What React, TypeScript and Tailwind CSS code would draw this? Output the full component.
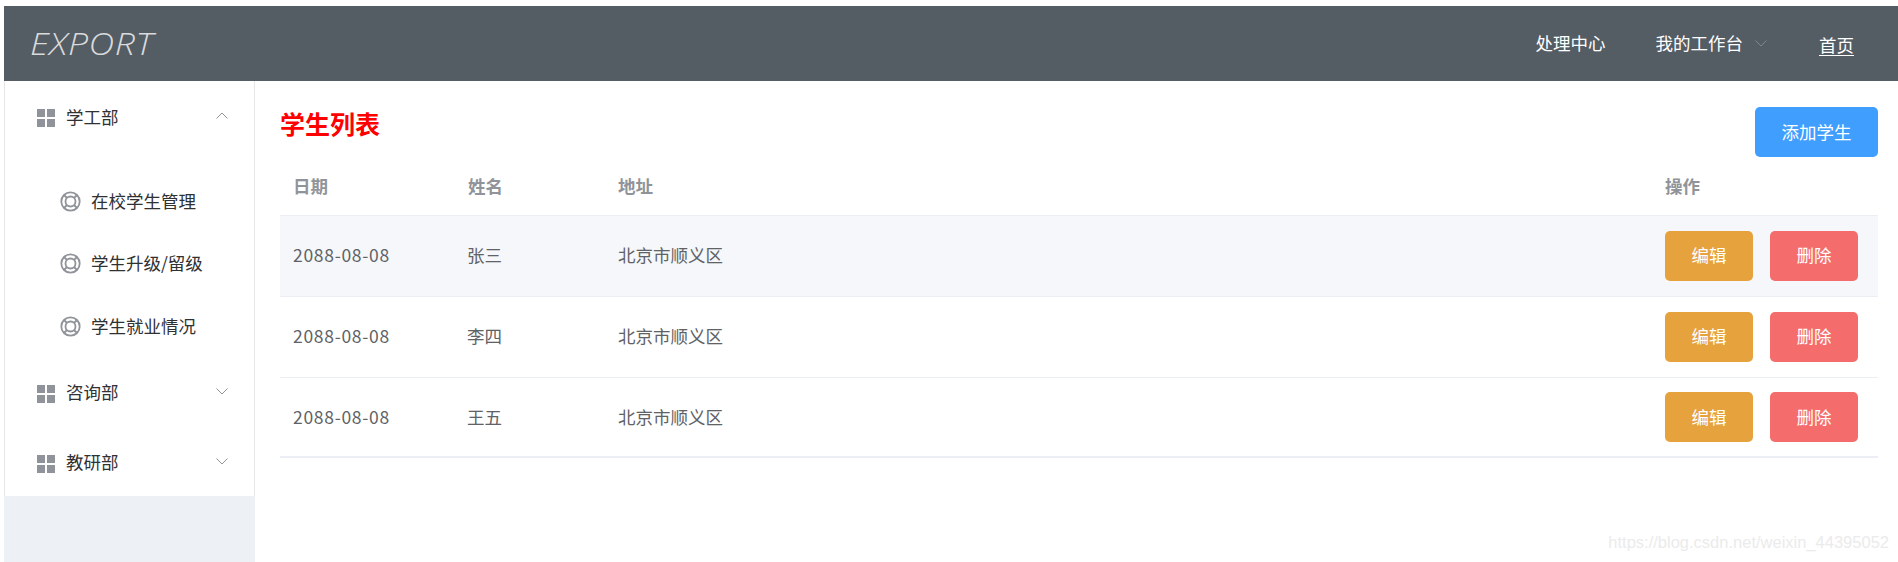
import React from "react";

const CJK = "font-['Noto_Sans_CJK_SC','Liberation_Sans',sans-serif]";

function GridIcon() {
  return (
    <svg width="18" height="18" viewBox="0 0 18 18" className="shrink-0 mt-[3px]">
      <rect x="0" y="0" width="8" height="8" fill="#909399" />
      <rect x="10" y="0" width="8" height="8" fill="#909399" />
      <rect x="0" y="10" width="8" height="8" fill="#909399" />
      <rect x="10" y="10" width="8" height="8" fill="#909399" />
    </svg>
  );
}

function HelpIcon() {
  return (
    <svg width="21" height="21" viewBox="0 0 21 21" fill="none" stroke="#909399" className="shrink-0">
      <circle cx="10.5" cy="10.5" r="9.2" strokeWidth="1.8" />
      <circle cx="10.5" cy="10.5" r="5" strokeWidth="1.8" />
      <path d="M4 4l3 3M17 4l-3 3M4 17l3-3M17 17l-3-3" strokeWidth="1.8" />
    </svg>
  );
}

function Chevron({ up, color = "#909399" }: { up?: boolean; color?: string }) {
  return (
    <svg width="12" height="7" viewBox="0 0 12 7" fill="none" stroke={color} strokeWidth="1" className="shrink-0">
      <path d={up ? "M0.5 6.5L6 1l5.5 5.5" : "M0.5 0.5L6 6l5.5-5.5"} />
    </svg>
  );
}

function MenuTitle({ label, up }: { label: string; up?: boolean }) {
  return (
    <div className="h-[70px] flex items-center pl-[32px] pr-[26px]">
      <GridIcon />
      <span className={`ml-[11px] flex-1 text-[17.5px] text-[#303133] ${up ? "mt-[2px]" : ""}`}>{label}</span>
      <span className="-mt-[2px] flex">
        <Chevron up={up} />
      </span>
    </div>
  );
}

function SubItem({ label }: { label: string }) {
  return (
    <div className="h-[62.5px] flex items-center pl-[55px]">
      <HelpIcon />
      <span className="ml-[10px] -mt-[1px] text-[17.5px] text-[#303133]">{label}</span>
    </div>
  );
}

const rows = [
  { name: "张三", striped: true },
  { name: "李四", striped: false },
  { name: "王五", striped: false },
];

export default function App() {
  return (
    <div className={`relative h-[562px] w-[1898px] overflow-hidden bg-white pt-[6px] pl-[4px] flex flex-col ${CJK}`}>
      <header className="h-[75px] shrink-0 bg-[#545c64] flex items-center pl-[26px] pr-[44px]">
        <span className="origin-left scale-x-[1.15] font-['Open_Sans',sans-serif] font-light italic text-[31px] leading-none tracking-[0.5px] text-[#d9dadb]">
          EXPORT
        </span>
        <nav className="ml-auto flex items-center text-[17.5px] text-white">
          <span>处理中心</span>
          <span className="ml-[50px]">我的工作台</span>
          <span className="ml-[12px]">
            <Chevron color="#7f868c" />
          </span>
          <span className="ml-[52px] mt-[3px] underline underline-offset-[3px]">首页</span>
        </nav>
      </header>
      <div className="flex flex-1 min-h-0">
        <aside className="w-[251px] shrink-0 bg-[#edf0f5] flex flex-col">
          <div className="bg-white border-x border-[#e6e6e6] h-[415px]">
            <MenuTitle label="学工部" up />
            <div className="pt-[19px]">
              <SubItem label="在校学生管理" />
              <SubItem label="学生升级/留级" />
              <SubItem label="学生就业情况" />
            </div>
            <MenuTitle label="咨询部" />
            <MenuTitle label="教研部" />
          </div>
        </aside>
        <main className="flex-1 pl-[25px] pr-[20px]">
          <div className="flex items-start justify-between h-[76px] pt-[26px]">
            <h2 className="text-[25px] leading-[42px] -mt-[5px] font-bold text-[#ff0000]">学生列表</h2>
            <button className="w-[123px] h-[50px] rounded-[5px] bg-[#409eff] text-white text-[17.5px]">添加学生</button>
          </div>
          <table className="w-full table-fixed border-collapse border-b-2 border-[#ebeef5]">
            <colgroup>
              <col className="w-[174px]" />
              <col className="w-[150px]" />
              <col />
              <col className="w-[213px]" />
            </colgroup>
            <thead>
              <tr className="h-[58px] border-b border-[#ebeef5] text-left text-[17.5px] font-bold text-[#909399]">
                <th className="pl-[13px] font-bold">日期</th>
                <th className="pl-[14px] font-bold">姓名</th>
                <th className="pl-[14px] font-bold">地址</th>
                <th className="pl-[0px] font-bold">操作</th>
              </tr>
            </thead>
            <tbody className="text-[17.5px] text-[#606266]">
              {rows.map((r) => (
                <tr key={r.name} className={`h-[81px] last:h-[80px] border-b border-[#ebeef5] last:border-b-0 ${r.striped ? "bg-[#f5f7fa]" : ""}`}>
                  <td className="pl-[13px] tracking-[0.7px]">2088-08-08</td>
                  <td className="pl-[13px]">{r.name}</td>
                  <td className="pl-[14px]">北京市顺义区</td>
                  <td>
                    <div className="flex gap-[17px]">
                      <button className="w-[88px] h-[50px] rounded-[5px] bg-[#e6a23c] text-white text-[17.5px]">编辑</button>
                      <button className="w-[88px] h-[50px] rounded-[5px] bg-[#f56c6c] text-white text-[17.5px]">删除</button>
                    </div>
                  </td>
                </tr>
              ))}
            </tbody>
          </table>
        </main>
      </div>
      <span className="absolute right-[9px] bottom-[7px] font-['Liberation_Sans',sans-serif] text-[16.5px] text-[#ebebeb]">
        https://blog.csdn.net/weixin_44395052
      </span>
    </div>
  );
}
